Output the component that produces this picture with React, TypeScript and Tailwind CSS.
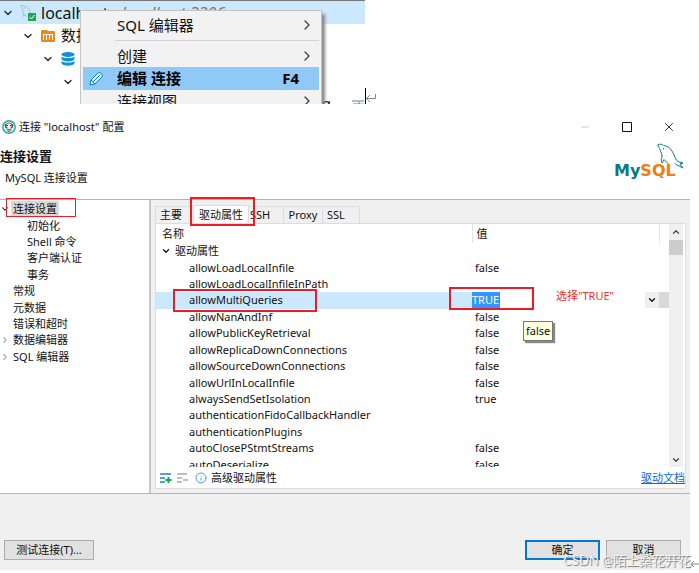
import type { ReactNode } from "react";
import { ChevronDown, ChevronRight, ChevronUp, Info, Minus, X } from "lucide-react";

type Property = { name: string; value: string };

const properties: Property[] = [
  { name: "allowLoadLocalInfile", value: "false" },
  { name: "allowLoadLocalInfileInPath", value: "" },
  { name: "allowMultiQueries", value: "TRUE" },
  { name: "allowNanAndInf", value: "false" },
  { name: "allowPublicKeyRetrieval", value: "false" },
  { name: "allowReplicaDownConnections", value: "false" },
  { name: "allowSourceDownConnections", value: "false" },
  { name: "allowUrlInLocalInfile", value: "false" },
  { name: "alwaysSendSetIsolation", value: "true" },
  { name: "authenticationFidoCallbackHandler", value: "" },
  { name: "authenticationPlugins", value: "" },
  { name: "autoClosePStmtStreams", value: "false" },
  { name: "autoDeserialize", value: "false" },
];

const settings = [
  { label: "连接设置", open: true, selected: true },
  { label: "初始化", child: true },
  { label: "Shell 命令", child: true },
  { label: "客户端认证", child: true },
  { label: "事务", child: true },
  { label: "常规" },
  { label: "元数据" },
  { label: "错误和超时" },
  { label: "数据编辑器", closed: true },
  { label: "SQL 编辑器", closed: true },
];

const Dolphin = ({ className }: { className: string }) => (
  <svg viewBox="0 0 28 28" className={className} fill="none" stroke="currentColor" strokeLinecap="round" strokeLinejoin="round">
    <path d="M2 2c2-1.500 4-1 5.500.5C13 3 16 7 18.500 13c1 2.500 1.500 4 3.500 5.500l5 1.500-3 1 3 4-5-2.500c-1.500-.5-2-1-3-2" />
    <path d="M2 2c-.5 2 1.500 2.500 2 4.500.5 3 2.500 4.500 2 7.500-1 2-1 4 0 6l2-3.500 4 4M7.500 5.500v.5" />
  </svg>
);

const MenuItem = ({ children }: { children: ReactNode }) => (
  <button type="button" className="flex h-[22px] w-full items-center justify-between pr-1 pl-[34px] text-left">
    <span>{children}</span>
    <ChevronRight className="size-4 text-[#444]" strokeWidth={2} />
  </button>
);

// Navigator tree with its context menu open
const Navigator = () => (
  <section className="relative h-[104px] w-[365px] overflow-hidden border-t border-[#777] text-[15px]">
    <div className="flex h-[23px] items-center bg-[#cce8ff] pl-0.5">
      <ChevronDown className="size-3 text-[#333]" strokeWidth={3} />
      <span className="relative ml-1.5 flex w-[21px]">
        <Dolphin className="size-4 text-[#7c9eb2]" />
        <svg viewBox="0 0 8 8" className="absolute top-2 left-2 size-2">
          <path fill="#23a455" d="M0 0h8v8H0z" />
          <path d="M1.5 4l2 2 3-4" fill="none" stroke="#fff" />
        </svg>
      </span>
      <span className="text-base">localhost</span>
      <i className="ml-1 text-base text-[#777]">- localhost:3306</i>
    </div>
    <div className="flex h-[23px] items-center pl-[22px]">
      <ChevronDown className="size-3 text-[#333]" strokeWidth={3} />
      <svg viewBox="0 0 14 12" className="mr-1.5 ml-[7px] h-3 w-3.5">
        <path fill="#f08519" d="M0 1Q0 0 1 0h5l1 1h6q1 0 1 1v9q0 1-1 1H1q-1 0-1-1z" />
        <path d="M2 4.500h10M2.500 5v5M5.500 5v5M8.500 5v5M11.500 5v5" stroke="#fff" />
      </svg>
      <span>数据库</span>
    </div>
    <div className="flex h-[23px] items-center pl-[42px]">
      <ChevronDown className="size-3 text-[#333]" strokeWidth={3} />
      <svg viewBox="0 0 14 14" className="ml-[7px] size-3.5" fill="#0d94d6">
        <ellipse cx="7" cy="2.500" rx="6.500" ry="2.500" />
        <path d="M.5 4.500c2 2 11 2 13 0v3c-2 2.500-11 2.500-13 0zM.5 9c2 2 11 2 13 0v2.500c-2 3-11 3-13 0z" />
      </svg>
    </div>
    <div className="flex h-[23px] items-center pl-[62px]">
      <ChevronDown className="size-3 text-[#333]" strokeWidth={3} />
    </div>
    <div className="flex h-5 items-center justify-end gap-5">
      <span>g</span>
      <svg viewBox="0 0 14 12" className="h-3 w-3.5" fill="none" stroke="#5f7d9c">
        <path d="M1 4h12M2 7h7M3 10h5M8 5v5" />
        <path d="M8 7h5" stroke="#c96" />
      </svg>
    </div>

    <div role="menu" className="absolute top-[9px] left-20 w-[242px] border border-[#c4c4c4] bg-[#f2f2f2] px-0.5 pt-[3px] shadow-[3px_4px_3px_#888]">
      <MenuItem>SQL 编辑器</MenuItem>
      <hr className="my-1 ml-8 border-[#d2d2d2]" />
      <MenuItem>创建</MenuItem>
      <button type="button" className="flex h-[23px] w-full items-center bg-[#90c8f6] pr-5 pl-1.5 text-left font-bold text-black">
        <svg viewBox="0 0 14 14" className="mr-3.5 size-3.5" fill="#d8efff" stroke="#0785c7" strokeLinejoin="round">
          <path d="M1 13l1-5 7-7q2-1 3.500.5T13 5L6 12z" />
          <path d="M2 8l4 4M4 10l7-7" />
        </svg>
        <span className="flex-1">编辑 连接</span>
        <span>F4</span>
      </button>
      <MenuItem>连接视图</MenuItem>
    </div>
  </section>
);

const SettingsTree = () => (
  <nav className="w-[151px] shrink-0 border-r-2 border-[#c8c8c8] bg-white pt-px">
    <ul className="flex h-[164px] flex-col">
      {settings.map((item) => (
        <li key={item.label} className={item.child ? "flex flex-1 items-center pl-[27px]" : "flex flex-1 items-center"}>
          {!item.child && (
            <span className="w-[11px]">
              {item.open && <ChevronDown className="size-2.5" strokeWidth={2.5} />}
              {item.closed && <ChevronRight className="size-2.5 text-[#888]" strokeWidth={2.5} />}
            </span>
          )}
          <a href="#settings" className={item.selected ? "bg-[#d9d9d9] px-0.5" : item.child ? "" : "px-0.5"}>
            {item.label}
          </a>
        </li>
      ))}
    </ul>
  </nav>
);

const PropertyTable = () => (
  <div className="flex">
    <div className="h-[243px] flex-1 overflow-hidden">
      <table className="h-[249px] w-full table-fixed border-collapse text-left">
        <thead>
          <tr className="h-[19px]">
            <th className="w-[316px] border-r border-[#e4e4e4] pl-1.5 font-normal">名称</th>
            <th className="border-r border-[#e4e4e4] pl-1 font-normal">值</th>
            <th className="w-2.5" />
          </tr>
        </thead>
        <tbody>
          <tr>
            <td colSpan={3} className="p-0">
              <span className="flex items-center gap-1 pl-[5px]">
                <ChevronDown className="size-2.5" strokeWidth={3} />
                驱动属性
              </span>
            </td>
          </tr>
          {properties.map(({ name, value }) =>
            value === "TRUE" ? (
              <tr key={name}>
                <td className="bg-[#cce8ff] py-0 pr-0 pl-[33px]">{name}</td>
                <td colSpan={2} className="p-0">
                  <span className="flex h-4 items-stretch justify-between">
                    <input aria-label={name} defaultValue={value} className="w-7 bg-[#3297fd] text-white" />
                    <span className="flex bg-[#d8d8d8] pr-2.5">
                      <button type="button" aria-label="展开" className="flex w-3.5 items-center justify-center bg-[#efefef]">
                        <ChevronDown className="size-2.5" strokeWidth={3} />
                      </button>
                    </span>
                  </span>
                </td>
              </tr>
            ) : (
              <tr key={name}>
                <td className="py-0 pr-0 pl-[33px]">{name}</td>
                <td colSpan={2} className="py-0 pr-0 pl-[3px]">{value}</td>
              </tr>
            ),
          )}
        </tbody>
      </table>
    </div>
    <div className="mr-0.5 flex w-3.5 flex-col items-center bg-[#f0f0f0]">
      <ChevronUp className="my-[3px] size-2.5 text-[#444]" strokeWidth={3} />
      <span className="h-[15px] w-full bg-[#cdcdcd]" />
      <ChevronDown className="mt-auto mb-0.5 size-2.5 text-[#444]" strokeWidth={3} />
    </div>
  </div>
);

const DriverPanel = () => (
  <main className="flex min-w-0 flex-1 flex-col pt-[5px] pr-1 pb-1 pl-1">
    <div role="tablist" className="flex h-[18px] items-end">
      <button type="button" role="tab" className="h-[17px] w-[38px] border-t border-l border-[#ddd] px-1 text-left">主要</button>
      <button type="button" role="tab" aria-selected="true" className="h-[18px] w-14 border border-b-0 border-[#ddd] bg-white">驱动属性</button>
      <button type="button" role="tab" className="h-[17px] w-[35px] border-t border-r border-[#ddd] pl-px text-left">SSH</button>
      <button type="button" role="tab" className="h-[17px] w-[39px] border-t border-r border-[#ddd]">Proxy</button>
      <button type="button" role="tab" className="h-[17px] w-[37px] border-t border-r border-[#ddd] px-1 text-left">SSL</button>
    </div>
    <div className="flex flex-1 flex-col border border-[#ddd] bg-white">
      <PropertyTable />
      <div className="flex flex-1 items-center pl-1">
        <svg viewBox="0 0 30 12" className="h-3 w-[30px]" fill="none" strokeWidth="1.500">
          <path d="M0 2h11M0 6h5M0 10h5" stroke="#1688cc" />
          <path d="M8.500 5v6M5.500 8h6" stroke="#18a558" strokeWidth="2" />
          <path d="M17 2h10M17 6h5M17 10h5M23 8h5" stroke="#aaa" />
        </svg>
        <Info className="mr-1 ml-[5px] size-3 text-[#4d9fd8]" strokeWidth={2} />
        <span className="flex-1">高级驱动属性</span>
        <a href="#docs" className="text-[#0a6ccf] underline">驱动文档</a>
      </div>
    </div>
  </main>
);

export default function App() {
  return (
    <div className="bg-white pb-[3px] font-['Noto_Sans','Noto_Sans_CJK_SC',sans-serif] text-[#111]">
      <div className="flex">
        <Navigator />
        <span className="mt-[88px] h-4 w-px bg-black" />
        <svg viewBox="0 0 10 8" className="mt-[94px] h-2 w-2.5" fill="none" stroke="#888">
          <path d="M9.500 0v4.500H1M4 1L.5 4.500 4 8" />
        </svg>
      </div>

      <section className="relative mt-[11px] mr-[9px] bg-[#f0f0f0] text-[11px] leading-4">
        <header className="flex h-[85px] flex-col border-b border-[#b4b4b4] bg-white">
          <div className="flex h-6 items-center pl-0.5">
            <svg viewBox="0 0 14 14" className="mr-[3px] size-3.5">
              <circle cx="7" cy="7" r="6.200" fill="#dff3f3" stroke="#2caaad" strokeWidth="1.500" />
              <path d="M3 5q1-2 4-2t4 2l-1 3-1-1v3l-2 2-2-2V7L4 8z" fill="#f6f2ee" stroke="#5c5450" strokeWidth=".8" />
              <path d="M3 5l2-1-1 4zM11 5L9 4l1 4zM6 9h2l-1 2zM5 5h1v1H5zM8 5h1v1H8z" fill="#2e2826" />
            </svg>
            <span className="flex-1">连接 "localhost" 配置</span>
            <button type="button" aria-label="最小化" className="flex w-[42px] justify-center text-[#ccc]">
              <Minus className="size-3" strokeWidth={2} />
            </button>
            <button type="button" aria-label="最大化" className="flex w-[42px] justify-center">
              <svg viewBox="0 0 10 10" className="size-2.5" fill="none" stroke="currentColor">
                <path d="M.5.5h9v9h-9z" />
              </svg>
            </button>
            <button type="button" aria-label="关闭" className="flex w-[42px] justify-center">
              <X className="size-3.5" strokeWidth={1.5} />
            </button>
          </div>
          <div className="flex flex-1 justify-between pr-1.5">
            <div>
              <h1 className="pt-2 text-[13px] leading-[18px] font-bold">连接设置</h1>
              <p className="pt-[5px] pl-[5px]">MySQL 连接设置</p>
            </div>
            <div className="relative h-11 w-[72px] pt-5 pl-0.5 font-['DejaVu_Sans',sans-serif] text-base leading-6 font-bold text-[#087a83]">
              <Dolphin className="absolute top-1 right-0 size-7" />
              <span>My<span className="text-[#ef7d12]">SQL</span></span>
            </div>
          </div>
        </header>

        <div className="flex h-[294px] border-b border-[#b4b4b4]">
          <SettingsTree />
          <DriverPanel />
        </div>

        <footer className="flex items-end gap-1.5 pt-[46px] pr-[9px] pb-2.5 pl-1">
          <button type="button" className="mr-auto h-5 w-[90px] border border-[#adadad] bg-[#e1e1e1]">测试连接(T)...</button>
          <button type="button" className="h-5 w-[75px] border-2 border-[#0078d7] bg-[#e1e1e1] leading-3">确定</button>
          <button type="button" className="h-5 w-[75px] border border-[#adadad] bg-[#e1e1e1]">取消</button>
        </footer>

        {/* Red marks over the settings to change */}
        <span className="absolute top-[83px] left-1.5 h-[19px] w-[70px] border border-[#ed1c24]" />
        <span className="absolute top-[82px] left-[190px] h-[29px] w-[65px] border-2 border-[#ed1c24]" />
        <span className="absolute top-[174px] left-[173px] h-[23px] w-[144px] border-2 border-[#ed1c24]" />
        <span className="absolute top-[172px] left-[449px] h-[23px] w-[85px] border-2 border-[#ed1c24]" />
        <span className="absolute top-[173px] left-[556px] text-[11px] text-[#ed3030]">选择"TRUE"</span>
        <span role="tooltip" className="absolute top-[206px] left-[523px] border border-[#777] bg-[#ffffe1] px-0.5 py-px shadow-[2px_2px_1px_#888]">false</span>
        <span className="absolute right-[-1px] bottom-0.5 font-['Lato','Noto_Sans_CJK_SC',sans-serif] text-[13px] whitespace-nowrap text-[#f4f4f4] [text-shadow:1px_1px_1px_#777]">
          CSDN @陌上桑花开花
        </span>
        <svg viewBox="0 0 10 8" className="absolute right-[-10px] bottom-0.5 h-2 w-2.5" fill="none" stroke="#888">
          <path d="M10 4H1M4 1L1 4l3 3" />
        </svg>
      </section>
    </div>
  );
}
